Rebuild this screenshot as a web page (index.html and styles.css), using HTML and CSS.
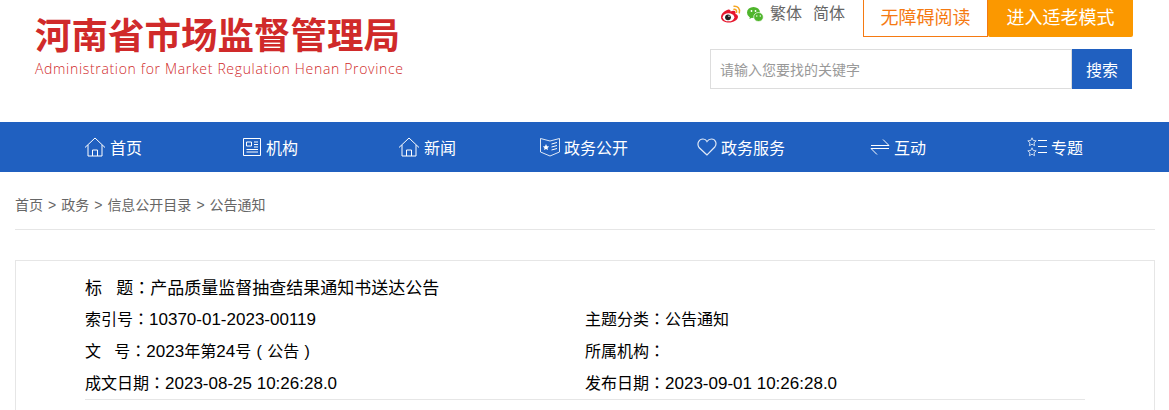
FILE: index.html
```html
<!DOCTYPE html>
<html lang="zh-CN">
  <head>
    <meta charset="UTF-8" />
    <title>产品质量监督抽查结果通知书送达公告</title>
    <link rel="stylesheet" href="styles.css">
  </head>
  <body>
    <div class="header">
      <div class="logo">
        <div class="logo-cn">河南省市场监督管理局</div>
        <div class="logo-en">Administration for Market Regulation Henan Province</div>
      </div>
      <div class="tools">
        <div class="tools-top">
          <svg class="share" width="22" height="18" viewBox="0 0 22 18">
            <path d="M8.500 4.500C4.500 5.500 1 9 1 12.200 1 15.500 5 17.500 9 17.500c4.500 0 9-2.800 9-5.800 0-1.800-1.500-2.400-2.600-2.800.6-1.700.2-3.200-2-3.200-1 0-2 .4-2.700.8-.2-1.400-.9-2.200-2.200-2z" fill="#e6162d"/>
            <ellipse cx="8.500" cy="12.300" rx="5.800" ry="4" fill="#fff"/>
            <circle cx="8" cy="12.300" r="2.900" fill="#222"/>
            <circle cx="9" cy="11.300" r=".7" fill="#fff"/>
            <path d="M14 1.200c3.500-.4 6.500 2.500 5.300 6.600M14 4.300c1.700-.2 3.100 1.200 2.500 3" fill="none" stroke="#f5a623" stroke-width="1.500" stroke-linecap="round"/>
          </svg>
          <svg class="share" width="20" height="18" viewBox="0 0 20 18">
            <ellipse cx="7.500" cy="7.500" rx="6.500" ry="5.500" fill="#4fb52c"/>
            <path d="M4 11.500l-.6 2.500 3-1.500z" fill="#4fb52c"/>
            <ellipse cx="12.500" cy="12" rx="4.800" ry="4.500" fill="#4fb52c" stroke="#fff" stroke-width=".7"/>
            <circle cx="5.500" cy="6" r=".9" fill="#fff"/>
            <circle cx="9.500" cy="6" r=".9" fill="#fff"/>
            <circle cx="10.800" cy="11" r=".7" fill="#fff"/>
            <circle cx="14.300" cy="11" r=".7" fill="#fff"/>
          </svg>
          <a class="lang">繁体</a>
          <a class="lang">简体</a>
          <a class="btn-read">无障碍阅读</a>
          <a class="btn-old">进入适老模式</a>
        </div>
        <div class="search">
          <div class="search-input">请输入您要找的关键字</div>
          <div class="search-btn">搜索</div>
        </div>
      </div>
    </div>

    <div class="nav">
      <a class="nav-item">
        <svg width="22" height="20" viewBox="0 0 22 20"><path d="M1 10.500 11 1l10 9.500M4 8v11h14V8M8.500 19v-6h5v6" fill="none" stroke="#fff"/></svg>
        首页
      </a>
      <a class="nav-item">
        <svg width="20" height="20" viewBox="0 0 20 20"><path d="M1.500 1.500h17v17h-17zM4.500 5h5v4h-5zM12 5h4M12 7.500h4M12 10h4M4.500 12.500h11.500M4.500 15h11.500" fill="none" stroke="#fff"/></svg>
        机构
      </a>
      <a class="nav-item">
        <svg width="22" height="20" viewBox="0 0 22 20"><path d="M1 10.500 11 1l10 9.500M4 8v11h14V8M8.500 19v-6h5v6" fill="none" stroke="#fff"/></svg>
        新闻
      </a>
      <a class="nav-item">
        <svg width="20" height="20" viewBox="0 0 20 20"><path d="M.5 1.500 10 4l9.500-2.500V15L10 19 .5 15z" fill="none" stroke="#dfe8f6"/><path d="m6 7 1 2.200 2.200.2-1.700 1.500.5 2.200L6 12l-2 1.100.5-2.200L2.800 9.400 5 9.200z" fill="#fff"/><path d="M11.500 7l5.500-1.500M11.500 10l5.500-1.500M11.500 13l5.500-1.500" stroke="#fff"/></svg>
        政务公开
      </a>
      <a class="nav-item">
        <svg width="20" height="20" viewBox="0 0 20 20"><path d="M10 18 2 10.500C-.5 6.500 2 2 6 2c2 0 3.200 1 4 2.500C11 3 12.500 2 14.500 2c4 0 5.800 4.500 3.300 8z" fill="none" stroke="#dfe8f6" stroke-width="1.200"/></svg>
        政务服务
      </a>
      <a class="nav-item">
        <svg width="20" height="20" viewBox="0 0 20 20"><path d="M1 8.500h18L13 2.500M19 11.500H1l6 6" fill="none" stroke="#fff"/></svg>
        互动
      </a>
      <a class="nav-item">
        <svg width="20" height="20" viewBox="0 0 20 20"><path d="m5 .800 1.200 2.700 3 .3-2.200 2 .6 2.900L5 7.200 2.400 8.700 3 5.800.8 3.800l3-.3zM5 10.800l1.200 2.700 3 .3-2.200 2 .6 2.900L5 17.200l-2.600 1.500.6-2.900-2.200-2 3-.3z" fill="none" stroke="#c9d9f0"/><path d="M11 3.500h9M11 9.500h9M11 15.500h9" stroke="#fff"/></svg>
        专题
      </a>
    </div>

    <div class="crumb">
      <a>首页</a><span class="sep">&gt;</span><a>政务</a><span class="sep">&gt;</span><a>信息公开目录</a><span class="sep">&gt;</span><a>公告通知</a>
    </div>

    <div class="article">
      <div class="meta">
        <div class="meta-title">标&nbsp;&nbsp;&nbsp;题<span class="colon" lang="zh-TW">：</span>产品质量监督抽查结果通知书送达公告</div>
        <div class="meta-grid">
          <div class="meta-row">索引号<span class="colon" lang="zh-TW">：</span><span class="num">10370-01-2023-00119</span></div>
          <div class="meta-row">主题分类<span class="colon" lang="zh-TW">：</span>公告通知</div>
          <div class="meta-row">文&nbsp;&nbsp;&nbsp;号<span class="colon" lang="zh-TW">：</span><span class="num">2023</span>年第<span class="num">24</span>号<span class="paren">(</span>公告<span class="paren">)</span></div>
          <div class="meta-row">所属机构<span class="colon" lang="zh-TW">：</span></div>
          <div class="meta-row">成文日期<span class="colon" lang="zh-TW">：</span><span class="num">2023-08-25 10:26:28.0</span></div>
          <div class="meta-row">发布日期<span class="colon" lang="zh-TW">：</span><span class="num">2023-09-01 10:26:28.0</span></div>
        </div>
      </div>
    </div>
  </body>
</html>
```

FILE: styles.css
```css
* {
  margin: 0;
  padding: 0;
  box-sizing: border-box;
}
html,
body {
  height: 410px;
  overflow: hidden;
}
body {
  background-color: #fff;
  font-family: "Liberation Sans", "Noto Sans CJK SC", sans-serif;
  color: #000;
}
/* 头部 */
.header {
  height: 122px;
  padding: 0 36px 0 35px;
  display: flex;
  justify-content: space-between;
}
.logo-cn {
  margin-top: 10px;
  font-family: "Noto Sans CJK SC", sans-serif;
  font-size: 36.500px;
  font-weight: 700;
  line-height: 48px;
  color: #d02a2a;
}
.logo-en {
  margin-top: 2px;
  font-family: "Open Sans", sans-serif;
  font-size: 14px;
  font-weight: 300;
  line-height: 18px;
  letter-spacing: .67px;
  color: #d02a2a;
}
.tools {
  width: 423px;
}
.tools-top {
  height: 37px;
  padding-left: 10px;
  display: flex;
  align-items: flex-start;
}
.share {
  margin: 5px 4px 0 0;
}
.lang {
  margin: 3px 11px 0 0;
  font-size: 16px;
  line-height: 22px;
  color: #666;
}
.btn-read,
.btn-old {
  height: 37px;
  font-size: 18px;
  line-height: 36px;
  text-align: center;
}
.btn-read {
  width: 125px;
  margin-left: 7px;
  border: 1px solid #f57a12;
  border-top: 0;
  color: #f57a12;
}
.btn-old {
  width: 145px;
  background-color: #fb9800;
  border-radius: 0 0 2px 2px;
  color: #fff;
}
.search {
  margin: 12px 1px 0 0;
  height: 40px;
  display: flex;
}
.search-input {
  flex: 1;
  border: 1px solid #ddd;
  padding-left: 9px;
  font-size: 14px;
  line-height: 40px;
  color: #999;
}
.search-btn {
  width: 60px;
  background-color: #2060c0;
  font-size: 16px;
  line-height: 44px;
  text-align: center;
  color: #fff;
}
/* 导航 */
.nav {
  height: 50px;
  padding-left: 35px;
  background-color: #2060c0;
  display: grid;
  grid-template-columns: repeat(7, 157px);
}
.nav-item {
  display: flex;
  justify-content: center;
  align-items: center;
  gap: 4px;
  padding-right: 1px;
  font-size: 16px;
  color: #fff;
}
/* 面包屑 */
.crumb {
  height: 58px;
  margin: 0 14px 0 15px;
  border-bottom: 1px solid #e6e6e6;
  font-size: 14px;
  line-height: 67px;
  color: #666;
}
.sep {
  margin: 0 5px;
}
/* 正文信息 */
.article {
  margin: 30px 14px 0 15px;
  height: 150px;
  border: 1px solid #e6e6e6;
  border-bottom: 0;
  padding: 11px 69px 0;
}
.meta {
  border-bottom: 1px solid #e6e6e6;
}
.meta-title {
  height: 31px;
  font-size: 17px;
  line-height: 33px;
}
.meta-row {
  height: 32px;
  font-size: 16px;
  line-height: 34px;
}
.meta-grid {
  display: grid;
  grid-template-columns: 500px 1fr;
}
/* 繁体字形的标点是居中的 */
.colon {
  font-family: "Noto Sans CJK TC", sans-serif;
  line-height: 1;
}
.paren {
  display: inline-block;
  width: 16px;
  line-height: 1;
  text-align: center;
}
.num {
  font-size: 17px;
  line-height: 1;
}
```
